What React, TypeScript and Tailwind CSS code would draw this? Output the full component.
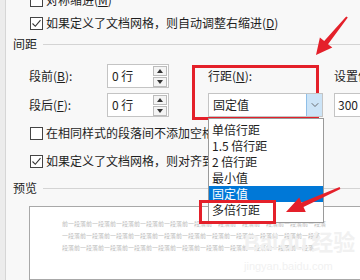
import { ChevronDown } from "lucide-react";

const font = "font-['Noto_Sans_CJK_SC','Noto_Sans',sans-serif]";

function CheckBox({ checked }: { checked?: boolean }) {
  return (
    <span className="w-[13px] h-[13px] border border-[#444] bg-white flex items-center justify-center shrink-0">
      {checked && (
        <svg width="11" height="11" viewBox="0 0 11 11">
          <path d="M1.5 5.5 L4.3 8.3 L9.5 2.2" fill="none" stroke="#333" strokeWidth="1.1" />
        </svg>
      )}
    </span>
  );
}

function CheckRow({ checked, top, children }: { checked?: boolean; top: string; children: React.ReactNode }) {
  return (
    <div className={`h-[22px] ${top} ml-[17px] flex items-center gap-[3px] whitespace-nowrap`}>
      <CheckBox checked={checked} />
      <span>{children}</span>
    </div>
  );
}

function Section({ title, top }: { title: string; top: string }) {
  return (
    <div className={`h-[20px] ${top} flex items-center gap-[6px]`}>
      <span>{title}</span>
      <div className="flex-1 h-px bg-[#d4d4d4]" />
    </div>
  );
}

function SpinInput({ value }: { value: string }) {
  return (
    <div className="w-[62px] h-[24px] bg-white border border-[#c4c4c4] flex items-center justify-between pl-[4px] pr-[1px]">
      <span>{value}</span>
      <div className="flex flex-col gap-px">
        <span className="w-[14px] h-[10px] border border-[#bcbcbc] bg-[#f4f4f4] flex items-center justify-center">
          <span className="w-0 h-0 border-l-[3px] border-r-[3px] border-b-[4px] border-l-transparent border-r-transparent border-b-[#333]" />
        </span>
        <span className="w-[14px] h-[10px] border border-[#bcbcbc] bg-[#f4f4f4] flex items-center justify-center">
          <span className="w-0 h-0 border-l-[3px] border-r-[3px] border-t-[4px] border-l-transparent border-r-transparent border-t-[#333]" />
        </span>
      </div>
    </div>
  );
}

const options = ["单倍行距", "1.5 倍行距", "2 倍行距", "最小值", "固定值", "多倍行距"];

const previewLines = [
  "前一段落前一段落前一段落前一段落前一段落前一段落前一段落前一段落前一段落前一段落前一段落",
  "一段落前一段落前一段落前一段落前一段落前一段落前一段落前一段落前一段落前一段落前一段落",
  "段落前一段落前一段落前一段落前一段落前一段落前一段落前一段落前一段落前一段落前一段落",
];

export default function App() {
  return (
    <div className={`relative w-[360px] h-[280px] overflow-hidden bg-[#f8f8f8] text-[#1e1e1e] text-[12px] leading-[16px] flex ${font}`}>
      {/* left window edge */}
      <div className="w-[6px] shrink-0 bg-[#ececec] border-r border-[#d6d6d6]" />

      <div className="flex-1 flex flex-col pl-[7px]">
        <CheckRow top="mt-[-12px] h-[24px]">
          对称缩进(<u>M</u>)
        </CheckRow>
        <CheckRow checked top="">
          如果定义了文档网格，则自动调整右缩进(<u>D</u>)
        </CheckRow>

        <Section title="间距" top="" />

        <div className="ml-[16px] mt-[10px] flex items-center h-[24px] whitespace-nowrap">
          <span className="w-[78px]">
            段前(<u>B</u>):
          </span>
          <SpinInput value="0 行" />
          <span className="ml-[39px] w-[115px]">
            行距(<u>N</u>):
          </span>
          <span className="ml-[11px]">设置值</span>
        </div>

        <div className="ml-[16px] mt-[5px] flex items-center h-[24px] whitespace-nowrap">
          <span className="w-[78px]">
            段后(<u>F</u>):
          </span>
          <SpinInput value="0 行" />
          <div className="relative ml-[39px] w-[115px] h-[24px] bg-white border border-[#c4c4c4] flex items-center z-10">
            <span className="flex-1 pl-[4px]">固定值</span>
            <span className="w-[16px] h-[22px] bg-[#cce4f7] border-l border-[#8fbfe8] flex items-center justify-center">
              <ChevronDown size={12} strokeWidth={1.5} color="#444" />
            </span>
            {/* open list */}
            <div className="absolute left-[-1px] top-[24px] w-[116px] bg-white border border-[#9a9a9a] pt-[3px] pb-[4px]">
              {options.map((o) => (
                <div
                  key={o}
                  className={`h-[16px] pl-[3px] flex items-center ${o === "固定值" ? "bg-[#0078d7] text-white" : ""}`}
                >
                  {o}
                </div>
              ))}
            </div>
          </div>
          <div className="ml-[11px] w-[60px] h-[24px] bg-white border border-[#c4c4c4] flex items-center pl-[3px]">
            300 磅
          </div>
        </div>

        <CheckRow top="mt-[5px]">在相同样式的段落间不添加空格(<u>C</u>)</CheckRow>
        <CheckRow checked top="mt-[6px]">
          如果定义了文档网格，则对齐到网格(<u>W</u>)
        </CheckRow>

        <Section title="预览" top="mt-[6px]" />

        <div className="mt-[8px] ml-[16px] mr-[-20px] flex-1 bg-white border border-[#a8a8a8] pt-[11px] pl-[32px] overflow-hidden">
          {previewLines.map((l, i) => (
            <div key={i} className="text-[6px] leading-[12px] text-[#bdbdbd] whitespace-nowrap">
              {l}
            </div>
          ))}
        </div>
      </div>

      {/* watermark */}
      <div className="absolute left-[244px] top-[228px] text-[#f1f1f1] pointer-events-none font-['Liberation_Sans',sans-serif]">
        <div className="text-[22px] leading-[24px] font-bold">
          Bai<span className="ml-[2px]">du</span>
          <span className={`ml-[4px] ${font}`}>经验</span>
        </div>
        <div className="text-[11px] leading-[14px] mt-[4px]">jingyan.baidu.com</div>
      </div>

      {/* red annotations */}
      <div className="absolute left-[192px] top-[65px] w-[127px] h-[55px] border-[3px] border-[#e4202a] pointer-events-none" />
      <div className="absolute left-[199px] top-[200px] w-[77px] h-[24px] border-[3px] border-[#e4202a] pointer-events-none z-20" />
      <svg className="absolute left-0 top-0 pointer-events-none z-30" width="360" height="280">
        <polygon
          fill="#e4202a"
          points="316,55 319.9,37.6 324.2,41 346.2,16.4 347.8,17.6 328,44.2 332.3,47.6"
        />
        <polygon
          fill="#e4202a"
          points="286,212 299.2,197.4 301.5,202.4 339.6,187.1 340.4,188.9 303.5,207 305.8,212"
        />
      </svg>
    </div>
  );
}
